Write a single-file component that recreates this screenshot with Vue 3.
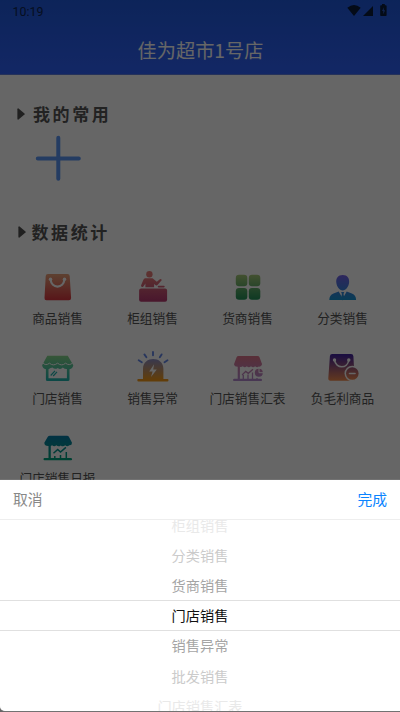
<script setup>
const items = [
  { icon: 'bag', label: '商品销售' },
  { icon: 'counter', label: '柜组销售' },
  { icon: 'blocks', label: '货商销售' },
  { icon: 'person', label: '分类销售' },
  { icon: 'store', label: '门店销售' },
  { icon: 'alarm', label: '销售异常' },
  { icon: 'summary', label: '门店销售汇表' },
  { icon: 'minus', label: '负毛利商品' },
  { icon: 'daily', label: '门店销售日报' },
]
const gradients = [
  ['bag', '#e89f78', '#dc3840'],
  ['counter', '#e87c78', '#b83d72'],
  ['blocks', '#a5c878', '#208f58'],
  ['person', '#7460e8', '#1596d5'],
  ['store', '#8bd88b', '#20b5ae'],
  ['alarm', '#788ce6', '#f59a18'],
  ['summary', '#e07588', '#b489cf'],
  ['minus', '#4424a0', '#f28a50'],
  ['daily', '#087baa', '#00a47c'],
]
const options = [
  { text: '柜组销售', tone: 'far' },
  { text: '分类销售', tone: 'mid' },
  { text: '货商销售', tone: 'near' },
  { text: '门店销售', tone: 'on' },
  { text: '销售异常', tone: 'near' },
  { text: '批发销售', tone: 'mid' },
  { text: '门店销售汇表', tone: 'far' },
]
</script>

<template>
  <div class="phone">
    <header class="top">
      <div class="status">
        <span>10:19</span>
        <svg class="signals" width="40" height="14" viewBox="0 0 40 14">
          <path d="M.3 3.8Q7-1.7 13.7 3.8L7 12Z" />
          <path d="M26 2V12H16Z" />
          <path d="M34 1.2h1V0h2.8v1.2h1q.8 0 .8.8v9.2q0 .8-.8.8H34q-.8 0-.8-.8V2q0-.8.8-.8Z" />
          <path class="charge" d="M36.9 3.3 35 7h1.3v3.2L38.1 6.3h-1.3Z" />
        </svg>
      </div>
      <h1>佳为超市1号店</h1>
    </header>

    <main>
      <h2 class="first">
        <svg width="8" height="12" viewBox="0 0 8 12"><path d="M.4 1.2Q.4.2 1.5.4L7.5 5.4Q8 6 7.5 6.6L1.5 11.6Q.4 11.8.4 10.8Z" /></svg>
        <span>我的常用</span>
      </h2>
      <svg class="plus" width="46" height="46" viewBox="0 0 46 46"><path d="M23.3 2.8V43.8M2.8 23.4H43.8" /></svg>
      <h2 class="second">
        <svg width="8" height="12" viewBox="0 0 8 12"><path d="M.4 1.2Q.4.2 1.5.4L7.5 5.4Q8 6 7.5 6.6L1.5 11.6Q.4 11.8.4 10.8Z" /></svg>
        <span>数据统计</span>
      </h2>
      <svg class="defs" width="0" height="0">
        <defs>
          <linearGradient v-for="g in gradients" :id="'g-' + g[0]" :key="g[0]" gradientUnits="userSpaceOnUse" x1="0" y1="7" x2="0" y2="32">
            <stop offset="0" :stop-color="g[1]" />
            <stop offset="1" :stop-color="g[2]" />
          </linearGradient>
        </defs>
      </svg>
      <div class="grid">
        <div v-for="item in items" :key="item.icon" class="item">
          <svg width="39" height="40" viewBox="0.5 0 39 40">
            <template v-if="item.icon === 'bag'">
              <path fill="url(#g-bag)" d="M10.5 6H30q2 0 2.2 2l1.4 22q0 2.2-2.2 2.2H9Q6.8 32.2 7 30L8.2 8.2Q8.3 6 10.5 6Z" />
              <path class="line" d="M13 11.2C14 21 26 21 27 11.2" />
              <circle class="white" cx="13" cy="11.3" r="1.7" /><circle class="white" cx="27" cy="11.3" r="1.7" />
            </template>
            <g v-else-if="item.icon === 'counter'" fill="url(#g-counter)">
              <circle cx="16.9" cy="6.3" r="3.2" />
              <path d="M12.7 10.3H20L24.3 13.8 27.4 11.2Q29 10.5 29.2 12.3L25 17Q23.9 18 22.8 17.1L21.6 16.1V19.2H12.9V15.5L10.7 18.8Q8.5 19.7 8.5 17.6L10.8 12Q11.4 10.5 12.7 10.3Z" />
              <rect x="25.2" y="17.8" width="7" height="1.6" rx=".8" />
              <rect x="6.6" y="20.4" width="28" height="13.4" rx="2" />
            </g>
            <g v-else-if="item.icon === 'blocks'" fill="url(#g-blocks)">
              <rect x="8.3" y="6.8" width="11.5" height="11.5" rx="3.2" /><rect x="21.3" y="6.8" width="11.5" height="11.5" rx="3.2" />
              <rect x="8.3" y="20" width="11.5" height="11.8" rx="3.2" /><rect x="21.3" y="20" width="11.5" height="11.8" rx="3.2" />
            </g>
            <g v-else-if="item.icon === 'person'" fill="url(#g-person)">
              <path d="M20.2 7C25 7 27 10.4 26.6 14.5S23.5 22.4 20.2 22.4 14.2 18.6 13.8 14.5 15.4 7 20.2 7Z" />
              <path d="M6.8 32Q6.8 27.2 11 25.5L16.2 23.4 20.2 30.5 24.2 23.4 29.4 25.5Q33.6 27.2 33.6 32Z" />
              <path d="M18.6 24h3.2l-.8 2 1.1 5.2-1.9 1-1.9-1L19.4 26Z" />
            </g>
            <template v-else-if="item.icon === 'store'">
              <path fill="url(#g-store)" d="M9.8 7.8H30.3L35.8 17.2Q35.2 20.5 32 21.3V31.5Q32 33 30.5 33H9.8Q8.4 33 8.4 31.5V21.3Q5.2 20.5 4.6 17.2Z" />
              <path class="white" d="M11 21.2Q13.2 19.5 15 19.4 17.3 22 20.3 20 23 22 25.3 19.5 27.2 21.2 29.4 21.1V30.3H11Z" />
              <path class="line thin" d="M5.5 15Q8 18.2 12 15.2 15.8 18.5 20 15.2 24.3 18.5 28 15.2 32 18.2 35 15" />
              <path d="M13.2 27.5 17.5 22.8M15.7 28 19.5 23.8" fill="none" stroke="#20b5ae" stroke-width="1.2" />
            </template>
            <template v-else-if="item.icon === 'alarm'">
              <path fill="url(#g-alarm)" d="M10.5 31V20.8C10.5 7.8 30.9 7.8 30.9 20.8V31H35Q36 31 36 32.2T34.8 33.6H6Q4.8 33.6 4.8 32.2T6 31Z" />
              <path class="white" d="M21.6 16.3 16.7 23.6H20.1L18.5 29 24.3 21.4H20.7Z" />
              <path d="M20.5 4V7.2M11.9 6.4 13.9 9.2M29.1 6.4 27.3 9.2M6.2 12.3 9.3 14.2M35 12.3 32 14.2" fill="none" stroke="#6588e8" stroke-width="1.9" stroke-linecap="round" />
            </template>
            <template v-else-if="item.icon === 'summary'">
              <path fill="url(#g-summary)" d="M11 8H30Q31.5 8 32 9.3L34.6 16.3Q33.8 19 31.3 18.6 29.5 20 27.6 18.3 25.5 20 23.5 18.3 21.5 20 19.3 18.3 17.3 20 15.3 18.3 13.8 19.4 12.4 18.8V30.8H33.5Q34.6 31 34.6 32T33.5 33.1H6.5Q5.5 33 5.5 32T6.5 30.8H10.2V18.8Q7 18.8 6.5 16.3L9.1 9.3Q9.6 8 11 8Z" />
              <path fill="none" stroke="url(#g-summary)" stroke-width="1.3" d="M14.6 27 18.2 23.4 20.8 25.3 25.5 21.2M15.8 31V27M20.5 31V26.5M25 31V24.5M29.5 32V30" />
              <circle cx="31.3" cy="24.8" r="4" fill="url(#g-summary)" />
              <path class="line thin" d="M31.5 20.5V24.7H35.5" />
            </template>
            <template v-else-if="item.icon === 'minus'">
              <path fill="url(#g-minus)" d="M9.6 6H28.5Q30.7 6 30.9 8.2L32.2 32.7H8Q5.6 32.7 5.8 30.3L7.4 8.2Q7.6 6 9.6 6Z" />
              <path class="line slim" d="M12 12C13.5 21 25 21 26.3 12" />
              <circle class="white" cx="12" cy="12" r="1.7" /><circle class="white" cx="26.3" cy="12" r="1.7" />
              <circle class="white" cx="29.8" cy="25.5" r="7.8" /><circle cx="29.8" cy="25.5" r="6.3" fill="url(#g-minus)" />
              <path class="line slim" d="M27 25.5H32.5" />
            </template>
            <template v-else>
              <path fill="url(#g-daily)" d="M12.3 7.7H29.5Q30.8 7.7 31.4 8.8L34.5 14.8Q34.4 17.7 31.8 17.3 29.8 19 27.7 17.3 25.4 19.3 23.3 17.4 21.2 19.3 18.8 17.3 16.7 19 14.6 17.3L13.3 17.9V30.1H33.6Q34.6 30.3 34.6 31.2T33.6 32.3H7Q6 32.2 6 31.2T7 30.1H11V18Q7 18.2 6.8 14.8L10.3 8.8Q10.9 7.7 12.3 7.7Z" />
              <path fill="none" stroke="url(#g-daily)" stroke-width="1.5" d="M16 25.2 20.2 21.4 23 24 28.4 19.4M17.3 31V28M23 31V27M28.8 31V24" />
            </template>
          </svg>
          <span>{{ item.label }}</span>
        </div>
      </div>
    </main>

    <div class="mask"></div>
    <section class="sheet">
      <div class="toolbar"><span>取消</span><b>完成</b></div>
      <div class="picker">
        <div v-for="o in options" :key="o.text" class="option" :class="o.tone">{{ o.text }}</div>
      </div>
    </section>
  </div>
</template>

<style>
body { background: #666; }
</style>

<style scoped>
.phone { position: relative; width: 400px; height: 712px; overflow: hidden; background: #fff; font-family: "Noto Sans CJK SC", sans-serif; color: #555; }
.top { height: 75px; box-sizing: border-box; background: linear-gradient(#205adf, #3062fc); border-bottom: 1px solid #5c7de0; }
.status { height: 24px; display: flex; justify-content: space-between; padding: 0 13px 0 12.5px; font: 12.4px/23px Roboto, sans-serif; color: #102550; }
.signals { margin-top: 4px; fill: #0a1c3a; }
.signals .charge { fill: #2b5bc8; }
h1 { margin: 0; height: 50px; line-height: 52px; font-size: 19.2px; font-weight: 400; text-align: center; color: #fff; padding-left: 1px; }
main { height: 637px; overflow: hidden; }
h2 { margin: 0; height: 24px; display: flex; align-items: center; gap: 8px; padding-left: 17px; font-size: 17px; line-height: 24px; font-weight: 700; letter-spacing: 2.6px; color: #555; }
h2 svg { fill: #505050; }
.first { margin-top: 27px; }
.plus { display: block; margin: 9px 0 0 35px; fill: none; stroke: #5b96f5; stroke-width: 4; stroke-linecap: round; }
.second { margin-top: 39px; gap: 6px; padding-left: 18px; }
.second span { margin-left: -.5px; }
.defs { display: block; }
.grid { display: grid; grid-template-columns: repeat(4, 95px); grid-auto-rows: 80px; padding: 24px 10px 0; }
.item { display: flex; flex-direction: column; align-items: center; }
.item svg { display: block; }
.item span { font-size: 12.7px; line-height: 19px; white-space: nowrap; }
.white { fill: #fff; }
.line { fill: none; stroke: #fff; stroke-width: 2.2; stroke-linecap: round; }
.thin { stroke-width: 1; }
.slim { stroke-width: 1.6; }
.mask { position: absolute; inset: 0; background: rgba(0, 0, 0, .6); }
.sheet { position: absolute; left: 0; right: 0; top: 480px; height: 231px; overflow: hidden; background: #fff; border-bottom-left-radius: 5px; box-shadow: 0 0 1px rgba(255, 255, 255, .8); }
.toolbar { height: 40px; box-sizing: border-box; display: flex; justify-content: space-between; padding: 0 13px; border-bottom: 1px solid #eee; font-size: 14.8px; line-height: 37px; color: #888; }
.toolbar b { font-weight: 400; color: #0a84ff; }
.picker { height: 191px; overflow: hidden; }
.option { height: 30.2px; box-sizing: border-box; font-size: 14.2px; line-height: 30px; text-align: center; }
.option:first-child { margin-top: -10.4px; }
.on { height: 31.2px; margin-bottom: -1px; color: #111; border: solid #e0e0e0; border-width: 1px 0; line-height: 28px; }
.near { color: #a5a5a5; }
.mid { color: #cbcbcb; }
.far { color: #e9e9e9; }
</style>
